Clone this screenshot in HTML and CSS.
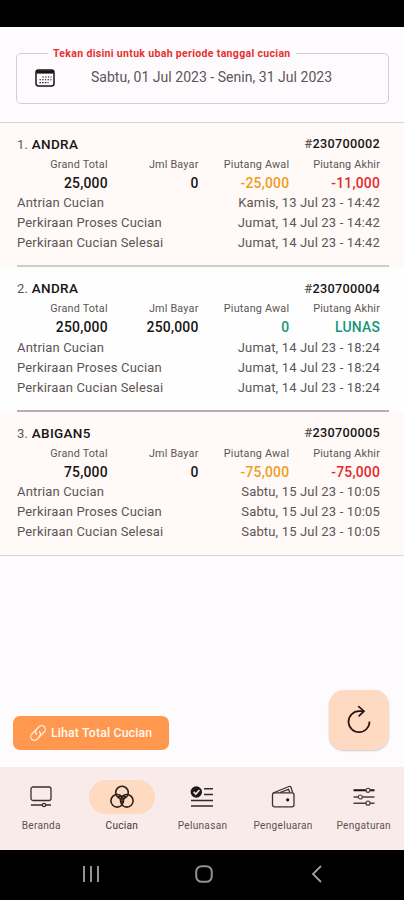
FILE: index.html
```
<!DOCTYPE html>
<html lang="id">
<head>
<meta charset="utf-8">
<meta name="viewport" content="width=device-width, initial-scale=1">
<title>Cucian</title>
<link rel="stylesheet" href="styles.css">
</head>
<body>
<div class="app">
  <div class="status-bar"></div>
  <header class="period">
    <fieldset class="period-box">
      <legend>Tekan disini untuk ubah periode tanggal cucian</legend>
      <svg class="calendar" width="20" height="20" viewBox="0 0 20 20" fill="none" stroke="#171515">
        <rect x="1" y="2" width="18" height="16" rx="2.4" stroke-width="1.5"/>
        <path d="M1.5 4h17" stroke-width="3.2"/>
        <path d="M7.5 9h9M4.5 11.8h12M4.5 14.6h9" stroke-width="1.1" stroke-dasharray="1.4 1.3"/>
      </svg>
      <span class="period-text">Sabtu, 01 Jul 2023 - Senin, 31 Jul 2023</span>
    </fieldset>
  </header>

  <main class="content">
    <section class="order tinted">
      <div class="row title"><span>1. <b>ANDRA</b></span><b class="code"><i>#</i>230700002</b></div>
      <div class="amounts">
        <span>Grand Total</span><span>Jml Bayar</span><span>Piutang Awal</span><span>Piutang Akhir</span>
        <b>25,000</b><b>0</b><b class="orange">-25,000</b><b class="red">-11,000</b>
      </div>
      <div class="row"><span>Antrian Cucian</span><span class="date">Kamis, 13 Jul 23 - 14:42</span></div>
      <div class="row"><span>Perkiraan Proses Cucian</span><span class="date">Jumat, 14 Jul 23 - 14:42</span></div>
      <div class="row"><span>Perkiraan Cucian Selesai</span><span class="date">Jumat, 14 Jul 23 - 14:42</span></div>
      <div class="divider light"></div>
    </section>
    <section class="order">
      <div class="row title"><span>2. <b>ANDRA</b></span><b class="code"><i>#</i>230700004</b></div>
      <div class="amounts">
        <span>Grand Total</span><span>Jml Bayar</span><span>Piutang Awal</span><span>Piutang Akhir</span>
        <b>250,000</b><b>250,000</b><b class="green">0</b><b class="green">LUNAS</b>
      </div>
      <div class="row"><span>Antrian Cucian</span><span class="date">Jumat, 14 Jul 23 - 18:24</span></div>
      <div class="row"><span>Perkiraan Proses Cucian</span><span class="date">Jumat, 14 Jul 23 - 18:24</span></div>
      <div class="row"><span>Perkiraan Cucian Selesai</span><span class="date">Jumat, 14 Jul 23 - 18:24</span></div>
      <div class="divider"></div>
    </section>
    <section class="order tinted last">
      <div class="row title"><span>3. <b>ABIGAN5</b></span><b class="code"><i>#</i>230700005</b></div>
      <div class="amounts">
        <span>Grand Total</span><span>Jml Bayar</span><span>Piutang Awal</span><span>Piutang Akhir</span>
        <b>75,000</b><b>0</b><b class="orange">-75,000</b><b class="red">-75,000</b>
      </div>
      <div class="row"><span>Antrian Cucian</span><span class="date">Sabtu, 15 Jul 23 - 10:05</span></div>
      <div class="row"><span>Perkiraan Proses Cucian</span><span class="date">Sabtu, 15 Jul 23 - 10:05</span></div>
      <div class="row"><span>Perkiraan Cucian Selesai</span><span class="date">Sabtu, 15 Jul 23 - 10:05</span></div>
    </section>
  </main>

  <div class="actions">
    <button class="total">
      <svg width="16" height="16" viewBox="0 0 16 16" fill="none" stroke="#fff1e4" stroke-width="1.2" stroke-linecap="round">
        <g transform="rotate(-45 8 8)"><rect x="-.8" y="4.300" width="17.600" height="7.400" rx="3.700"/><path d="M9.800 4.500Q6 5 6 8M6.200 11.500Q10 11 10 8"/></g>
      </svg>
      <span>Lihat Total Cucian</span>
    </button>
    <button class="refresh" aria-label="Muat ulang">
      <svg width="26" height="30" viewBox="0 0 26 30" fill="none" stroke="#2b1710" stroke-width="1.7">
        <path d="M23.500 16.500A10.500 10.500 0 1 1 13 6.200h5"/>
        <path d="M12.200 1.200 18 6.200l-5.400 5.200"/>
      </svg>
    </button>
  </div>

  <nav class="tabs">
    <a class="tab"><span class="pill">
      <svg width="24" height="24" viewBox="0 0 24 24" fill="none" stroke="#3a302e" stroke-width="1.300">
        <rect x="2" y="2" width="20" height="13.500" rx="2"/>
        <path d="M2 20h11M16.500 20H22" stroke-width="1.500"/><circle cx="15" cy="20" r="1.700"/>
      </svg></span><span>Beranda</span></a>
    <a class="tab active"><span class="pill">
      <svg width="24" height="24" viewBox="0 0 24 24" fill="none" stroke="#29201b" stroke-width="1.600">
        <circle cx="12" cy="7.600" r="6.300"/><circle cx="7.200" cy="15.800" r="6.300"/><circle cx="16.800" cy="15.800" r="6.300"/>
        <path d="M8.500 11.500h7L12 17.300z" stroke-width="1.200"/>
      </svg></span><span>Cucian</span></a>
    <a class="tab"><span class="pill">
      <svg width="24" height="24" viewBox="0 0 24 24" fill="none" stroke="#332b29" stroke-width="1.500">
        <circle cx="6.300" cy="7" r="5.700" fill="#1d1817" stroke="none"/><path d="m3.600 6.900 2.200 2.200 3.600-4.200" stroke="#f9ebea"/>
        <path d="M14 3.800h9M14 9.500h9M1 15.500h22M1 21h22"/>
      </svg></span><span>Pelunasan</span></a>
    <a class="tab"><span class="pill">
      <svg width="24" height="24" viewBox="0 0 24 24" fill="none" stroke="#3a302e" stroke-width="1.300">
        <rect x="1.500" y="7.800" width="21.500" height="14" rx="2"/>
        <path d="M2 8 18 1.500q1.600-.5 2.100 1.100L21.600 7.600M9 7.500l8.500-3.200 1.300 3.200"/><circle cx="16.700" cy="14.800" r="1.600" fill="#111" stroke="none"/>
      </svg></span><span>Pengeluaran</span></a>
    <a class="tab"><span class="pill">
      <svg width="24" height="24" viewBox="0 0 24 24" fill="none" stroke="#4a403e" stroke-width="1.400">
        <path d="M1.500 5.300H14M18 5.300h4.500" stroke="#171211" stroke-width="1.900"/>
        <path d="M1.500 12h4.800M10.300 12h12.200M1.500 18.200H14M18 18.200h4.500"/>
        <g stroke-width="1.200"><circle cx="16" cy="5.300" r="2"/><circle cx="8.300" cy="12" r="2"/><circle cx="16" cy="18.200" r="2"/></g>
      </svg></span><span>Pengaturan</span></a>
  </nav>

  <div class="system-bar">
    <svg width="18" height="18" viewBox="0 0 18 18" stroke="#929292" stroke-width="2"><path d="M2 1v16M9 1v16M16 1v16"/></svg>
    <svg width="18" height="18" viewBox="0 0 18 18" fill="none" stroke="#929292" stroke-width="2"><rect x="1.200" y="1.200" width="15.600" height="15.600" rx="5.500"/></svg>
    <svg width="18" height="18" viewBox="0 0 18 18" fill="none" stroke="#a0a0a0" stroke-width="1.800"><path d="M13 1 5 9l8 8"/></svg>
  </div>
</div>
</body>
</html>
```
FILE: styles.css
```
* { box-sizing: border-box; }
body {
  margin: 0;
  font-family: Roboto, "Liberation Sans", sans-serif;
  color: #5b5655;
}
.app {
  width: 404px;
  height: 900px;
  display: flex;
  flex-direction: column;
  background: #fefbfe;
  overflow: hidden;
}
.status-bar { height: 27px; flex: none; background: #000; }
.period {
  height: 96px;
  flex: none;
  padding: 19px 15px 0 16px;
  border-bottom: 1px solid #d6d3d3;
}
.period-box {
  margin: 0;
  min-width: 0;
  height: 58px;
  padding: 0 0 0 18px;
  border: 1px solid #d1cecf;
  border-radius: 5px;
}
legend {
  margin-left: 13px;
  padding: 0 5px;
  height: 14px;
  line-height: 15px;
  font-size: 10.500px;
  font-weight: 700;
  letter-spacing: .330px;
  color: #e5302f;
  white-space: nowrap;
}
.calendar { display: inline-block; vertical-align: middle; margin-top: 8px; }
.period-text {
  display: inline-block;
  vertical-align: middle;
  margin: 6px 0 0 32px;
  font-size: 14px;
  letter-spacing: .030px;
  line-height: 18px;
  white-space: nowrap;
}
.content { flex: none; }
.order { height: 144.500px; padding: 11px 24px 0 17px; background: #fffefe; }
.tinted { background: #fff9f8; }
.last { height: 143.500px; border-bottom: 1px solid #d6d3d3; }
.row {
  height: 20px;
  display: flex;
  justify-content: space-between;
  align-items: center;
  font-size: 13px;
  letter-spacing: .160px;
  line-height: 20px;
  white-space: nowrap;
}
.title b, .amounts b { font-weight: 500; color: #171515; }
.title { letter-spacing: .300px; }
.title span b { font-size: 13.500px; }
.title .code { font-size: 12.700px; }
.code i { font-style: normal; color: #555; }
.amounts {
  display: grid;
  grid-template-columns: repeat(4, 1fr);
  grid-template-rows: 20px 17px;
  align-items: center;
  margin-bottom: 2px;
  text-align: right;
  font-size: 10.800px;
  letter-spacing: .200px;
  white-space: nowrap;
}
.amounts b { font-size: 13.900px; }
.amounts .orange { color: #f29c1f; }
.amounts .red { color: #e32929; }
.amounts .green { color: #15967a; }
.divider { height: 2px; margin: 12px -9px 0 0; background: #b5b0ad; }
.light { background: #d1cdcb; }
.actions {
  flex: 1;
  display: flex;
  justify-content: space-between;
  align-items: flex-end;
  padding: 0 15px 17px 13px;
}
button { border: 0; padding: 0; font-family: inherit; }
.total {
  width: 156px;
  height: 34px;
  display: flex;
  align-items: center;
  gap: 5px;
  padding-left: 17px;
  border-radius: 7px;
  background: #ff984e;
  color: #fff8f1;
  font-size: 12.300px;
  letter-spacing: .150px;
  font-weight: 500;
  white-space: nowrap;
}
.refresh {
  width: 60px;
  height: 60px;
  display: grid;
  place-items: center;
  border-radius: 15px;
  background: #ffdac3;
  box-shadow: 0 1px 2px #0003;
}
.tabs {
  height: 83px;
  flex: none;
  display: grid;
  grid-template-columns: repeat(5, 1fr);
  padding: 13px 0 0 1px;
  background: #f9ebea;
}
.tab {
  display: flex;
  flex-direction: column;
  align-items: center;
  gap: 6px;
  font-size: 10.100px;
  letter-spacing: .280px;
  line-height: 12px;
  color: #5c5250;
  white-space: nowrap;
}
.pill { width: 66px; height: 34px; display: grid; place-items: center; border-radius: 17px; }
.active .pill { background: #ffd9c0; }
.active { color: #3d3532; }
.system-bar {
  height: 50px;
  flex: none;
  display: flex;
  justify-content: center;
  align-items: center;
  gap: 95px;
  padding: 0 0 2px 4px;
  background: #000;
}
```
